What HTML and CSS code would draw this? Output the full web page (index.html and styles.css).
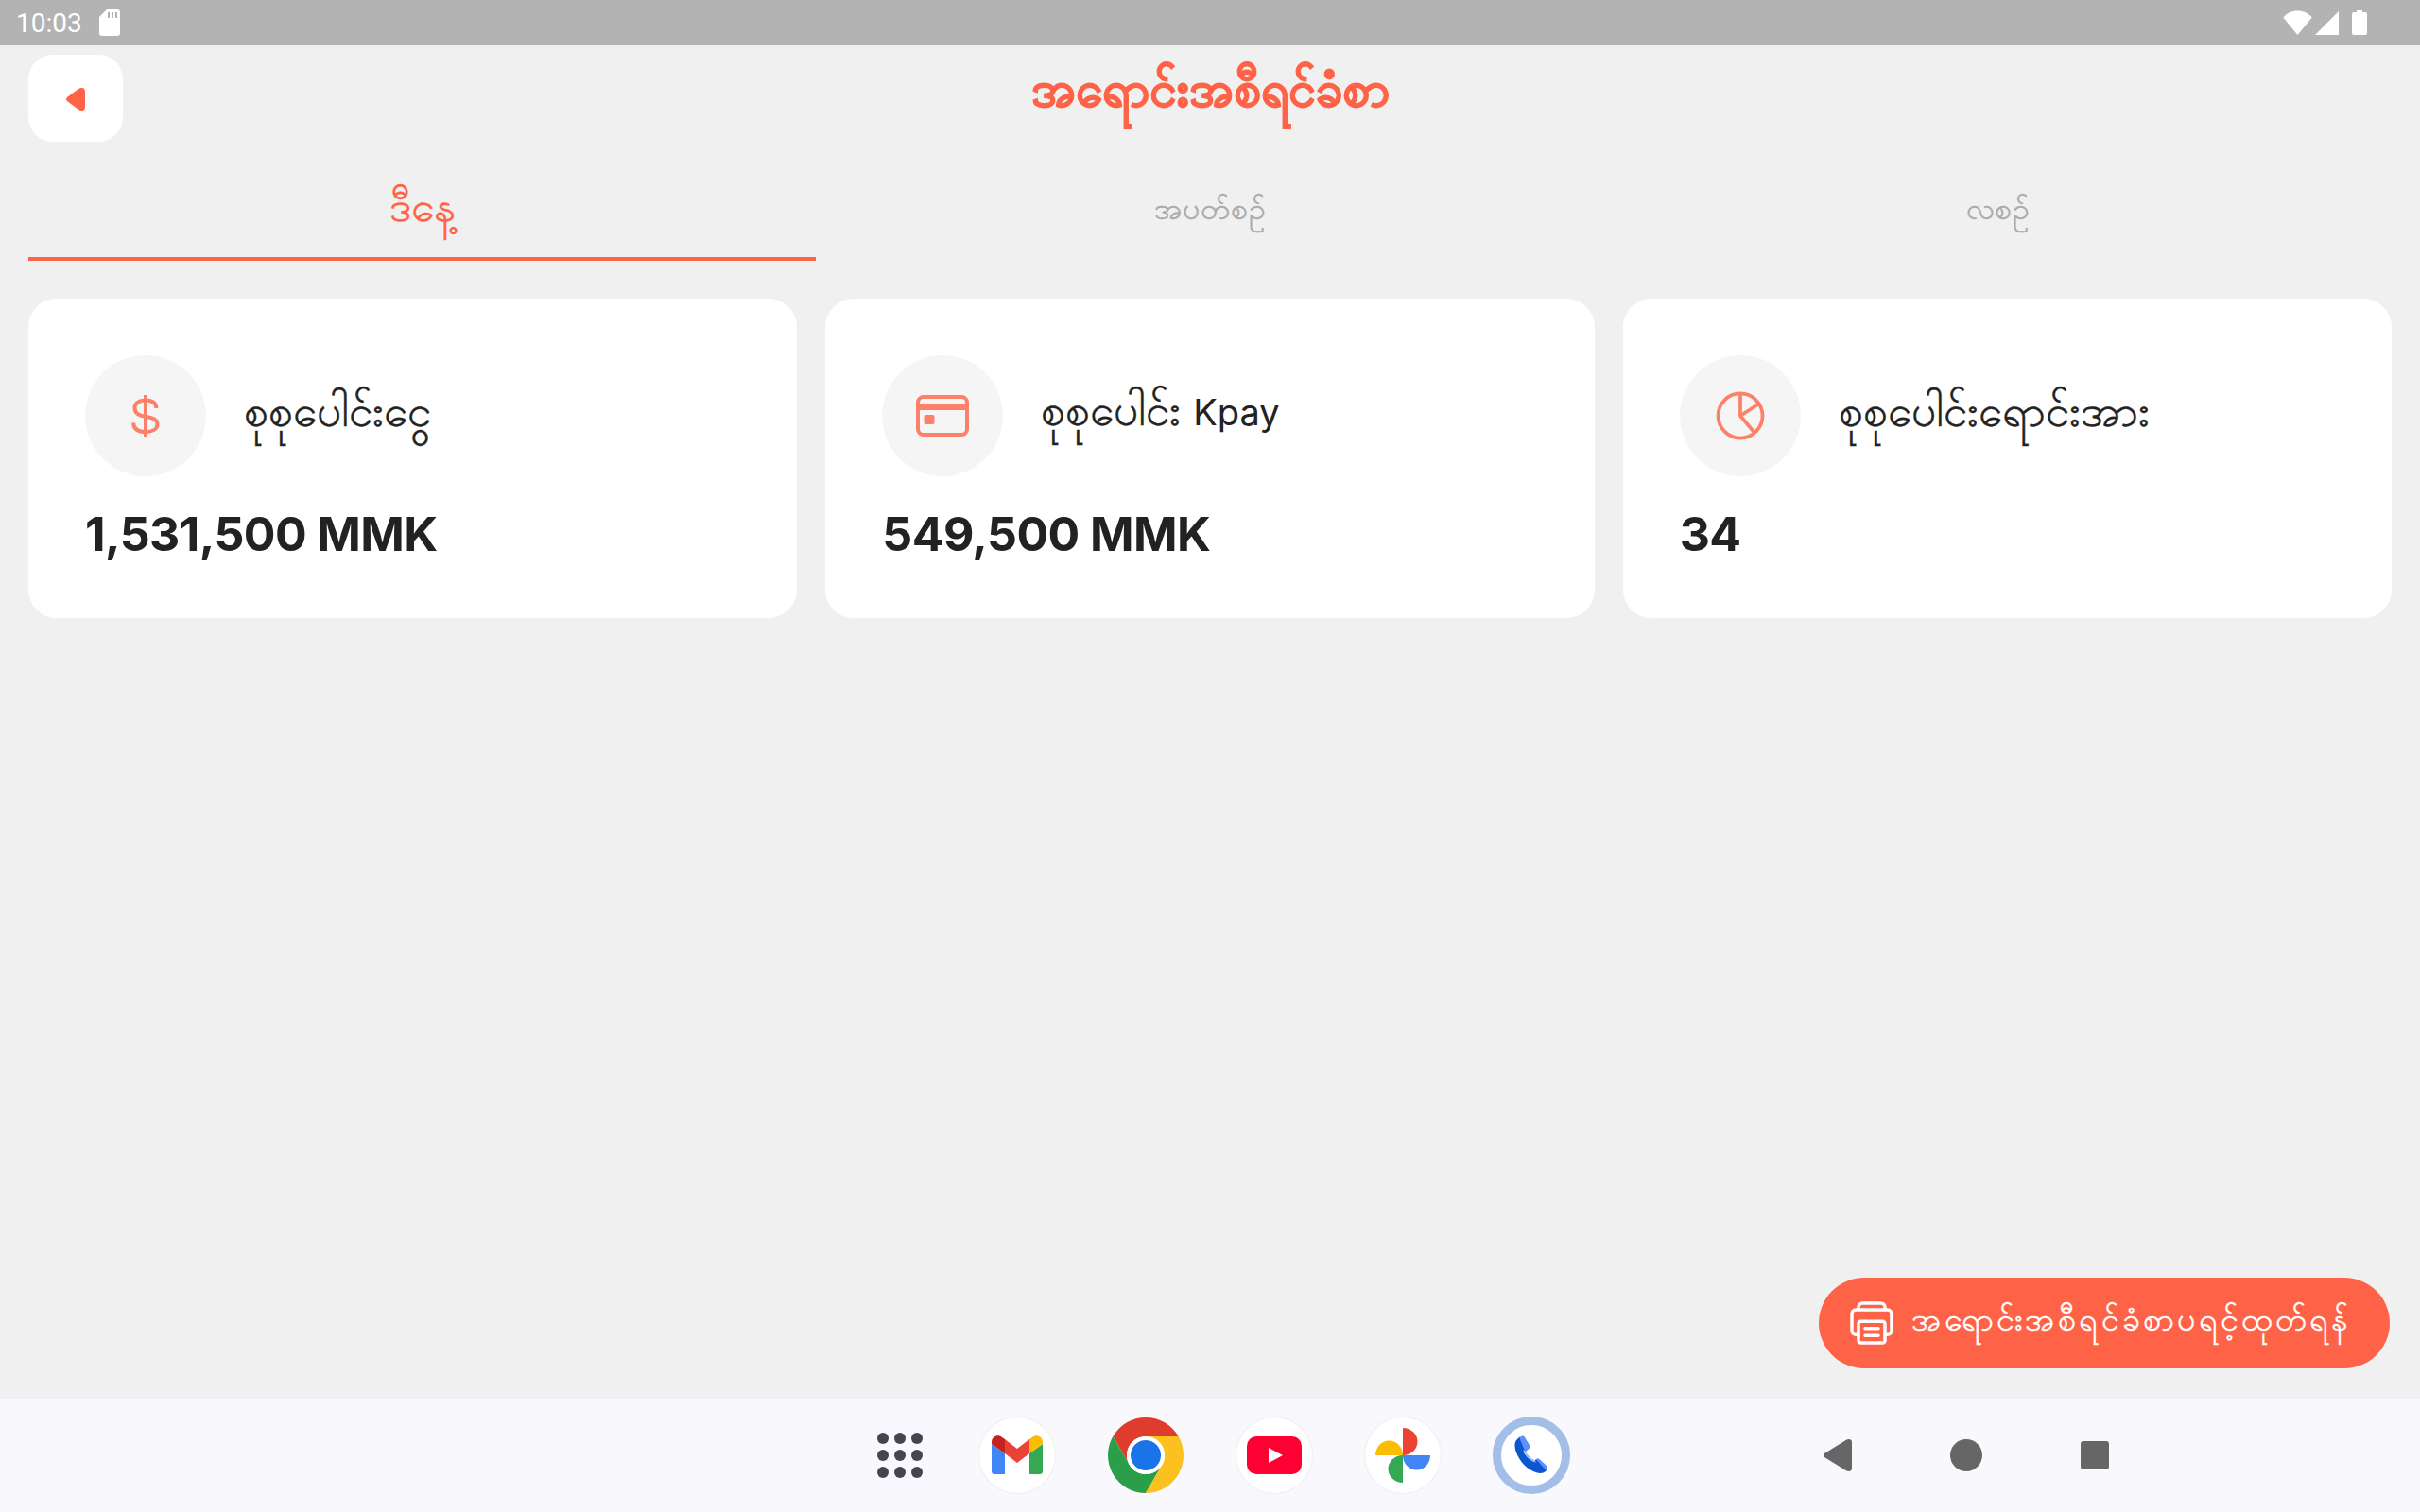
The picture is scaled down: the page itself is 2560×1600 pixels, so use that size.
FILE: index.html
```html
<!DOCTYPE html>
<html lang="my">
<head>
<meta charset="utf-8">
<title>အရောင်းအစီရင်ခံစာ</title>
<link rel="stylesheet" href="styles.css">
</head>
<body>
<div class="screen">
  <div class="status">
    <div class="status-left">
      <span class="time">10:03</span>
      <svg class="sd" viewBox="0 0 22 28"><path d="M8 0h11a3 3 0 0 1 3 3v22a3 3 0 0 1-3 3H3a3 3 0 0 1-3-3V8z" fill="#fff"/><path d="M9 3h2v6H9zM13 3h2v6h-2zM17 3h2v6h-2z" fill="#b3b3b3"/></svg>
    </div>
    <div class="status-right">
      <svg class="wifi" viewBox="0 0 31 26"><path d="M15.500 26 .3 7.500C4 3 9.500.5 15.500.5S27 3 30.700 7.500z" fill="#fff"/></svg>
      <svg class="signal" viewBox="0 0 25 25"><path d="M25 0v25H0z" fill="#fff"/></svg>
      <svg class="battery" viewBox="0 0 16 26"><path d="M5 0h6v2h3a2 2 0 0 1 2 2v20a2 2 0 0 1-2 2H2a2 2 0 0 1-2-2V4a2 2 0 0 1 2-2h3z" fill="#fff"/></svg>
    </div>
  </div>

  <header class="header">
    <button class="back">
      <svg class="back-icon" viewBox="0 0 20 24"><path d="M1 10 13 1c3-2 7-1.500 7 3v16c0 4.500-4 5-7 3L1 14c-1.300-1-1.300-3 0-4z" fill="#ff6347"/></svg>
    </button>
    <h1 class="title">အရောင်းအစီရင်ခံစာ</h1>
  </header>

  <nav class="tabs">
    <div class="tab tab-active">ဒီနေ့</div>
    <div class="tab">အပတ်စဉ်</div>
    <div class="tab">လစဉ်</div>
  </nav>

  <section class="cards">
    <article class="card">
      <div class="card-head">
        <div class="icon-wrap">
          <svg class="icon-dollar" viewBox="0 0 48 48" fill="none" stroke="#ff6347" stroke-width="4"><path d="M24 2v44"/><path d="M35.500 16C35 10 30.500 7.500 24 7.500c-7 0-11.500 3.500-11.500 8.500 0 12.500 24 5.500 24 17 0 5-5 8-12.500 8-8 0-12.500-3.500-13-9.500"/></svg>
        </div>
        <div class="label">စုစုပေါင်းငွေ</div>
      </div>
      <div class="value">1,531,500 MMK</div>
    </article>
    <article class="card">
      <div class="card-head">
        <div class="icon-wrap">
          <svg class="icon-64" viewBox="0 0 512 512" fill="none" stroke="#ff6347"><rect x="48" y="96" width="416" height="320" rx="48" stroke-width="32"/><path d="M48 184h416" stroke-width="48"/><rect x="100" y="248" width="88" height="80" rx="16" fill="#ff6347" stroke="none"/></svg>
        </div>
        <div class="label">စုစုပေါင်း <span class="latin">Kpay</span></div>
      </div>
      <div class="value">549,500 MMK</div>
    </article>
    <article class="card">
      <div class="card-head">
        <div class="icon-wrap">
          <svg class="icon-64" viewBox="0 0 512 512" fill="none" stroke="#ff6347" stroke-width="30" stroke-linecap="round" stroke-linejoin="round"><circle cx="256" cy="256" r="188"/><path d="M256 68v188l152-98M256 256l114 136"/></svg>
        </div>
        <div class="label">စုစုပေါင်းရောင်းအား</div>
      </div>
      <div class="value">34</div>
    </article>
  </section>

  <main class="spacer"></main>

  <button class="fab">
    <svg class="fab-icon" viewBox="0 0 512 512" fill="none" stroke="#fff" stroke-width="32" stroke-linejoin="round"><path d="M384 368h24a40 40 0 0 0 40-40V168c0-22-18-40-40-40H104c-22 0-40 18-40 40v160a40 40 0 0 0 40 40h24"/><path d="M384 128v-24a40 40 0 0 0-40-40H168a40 40 0 0 0-40 40v24"/><rect x="128" y="240" width="256" height="208" rx="24"/><path d="M192 308h128M192 376h128" stroke-linecap="round"/></svg>
    <span class="fab-text">အရောင်းအစီရင်ခံစာပရင့်ထုတ်ရန်</span>
  </button>

  <footer class="navbar">
    <div class="dock">
      <svg class="apps" viewBox="0 0 48 48" fill="#45454f"><circle cx="6" cy="6" r="6"/><circle cx="24" cy="6" r="6"/><circle cx="42" cy="6" r="6"/><circle cx="6" cy="24" r="6"/><circle cx="24" cy="24" r="6"/><circle cx="42" cy="24" r="6"/><circle cx="6" cy="42" r="6"/><circle cx="24" cy="42" r="6"/><circle cx="42" cy="42" r="6"/></svg>
      <svg class="app app-disc" viewBox="0 0 80 80"><circle cx="40" cy="40" r="40" fill="#fff"/><path d="M13 28l14 10v22H16a3 3 0 0 1-3-3z" fill="#4285f4"/><path d="M67 28 53 38v22h11a3 3 0 0 0 3-3z" fill="#34a853"/><path d="M27 23l13 10 13-10v15L40 48 27 38z" fill="#ea4335"/><path d="M27 23v15L13 28v-2c0-6 7-9 11-5z" fill="#c5221f"/><path d="M53 23v15l14-10v-2c0-6-7-9-11-5z" fill="#fbbc04"/></svg>
      <svg class="app" viewBox="0 0 80 80"><path d="M5.360 20A40 40 0 0 1 74.640 20H40A20 20 0 0 0 22.680 50z" fill="#e03c2e"/><path d="M5.360 20 22.680 50A20 20 0 0 0 57.320 50L40 80A40 40 0 0 1 5.360 20z" fill="#2b9e49"/><path d="M74.640 20H40A20 20 0 0 1 57.320 50L40 80A40 40 0 0 0 74.640 20z" fill="#fcc11e"/><circle cx="40" cy="40" r="20" fill="#fff"/><circle cx="40" cy="40" r="16" fill="#1a73e8"/></svg>
      <svg class="app app-disc" viewBox="0 0 80 80"><circle cx="40" cy="40" r="40" fill="#fff"/><rect x="11" y="20" width="58" height="40" rx="10" fill="#ff0033"/><path d="M34 32l15 8-15 8z" fill="#fff"/></svg>
      <svg class="app app-disc" viewBox="0 0 80 80"><circle cx="40" cy="40" r="40" fill="#fff"/><path d="M40 11a15.500 14.500 0 0 1 0 29z" fill="#ea4335"/><path d="M11 40a14.500 15.500 0 0 1 29 0z" fill="#fbbc04"/><path d="M40 69a15.500 14.500 0 0 1 0-29z" fill="#34a853"/><path d="M69 40a14.500 15.500 0 0 1-29 0z" fill="#4285f4"/></svg>
      <svg class="app-phone" viewBox="0 0 84 84"><circle cx="42" cy="42" r="36.500" fill="#fff" stroke="#a3bfe8" stroke-width="9"/><path d="M29.500 22.500 26.500 25.500C24 28 24 33 25.500 37.500 29 49 39 58 48 60.500 52 61.500 55.500 61 58 58L58.500 55 47 46 44.500 49C40 47 35 42 33.500 37.500L38 34.500z" fill="#0b57d0"/><path d="M29.500 24C31 21 34 21 35 23L40.500 32C41 33 40.500 34 39.500 35L35.500 38.500z" fill="#5e8ffa"/><path d="M47 46C48 45 49.500 45 50.500 46L58 53C59 54.500 59 56.500 57.500 58z" fill="#5e8ffa"/><path d="M33.500 36 36 38.500C38 42 41.500 45.500 45.500 47.500L47.500 50C41 48 36 43 33.500 36z" fill="#8fb0fb"/></svg>
    </div>
    <div class="sysnav">
      <svg class="nav-back" viewBox="0 0 30 34"><path d="M1 15 24 .8c2.500-1.500 6-.8 6 2.200v28c0 3-3.500 3.700-6 2.200L1 19c-1.300-1-1.300-3 0-4z" fill="#666"/></svg>
      <span class="nav-home"></span>
      <span class="nav-recent"></span>
    </div>
  </footer>
</div>
</body>
</html>
```

FILE: styles.css
```css
* { box-sizing: border-box; }
html, body { margin: 0; padding: 0; }
body { font-family: Inter, "Noto Sans", "DejaVu Sans", sans-serif; background: #f0f0f0; }
.screen { position: relative; width: 2560px; height: 1600px; display: flex; flex-direction: column; overflow: hidden; background: #f0f0f0; }

.status { height: 48px; flex: none; background: #b3b3b3; display: flex; justify-content: space-between; align-items: center; padding: 0 56px 0 17px; }
.status-left { display: flex; align-items: center; gap: 18px; padding-top: 2px; }
.time { font-family: Roboto, sans-serif; font-size: 28px; color: #fff; line-height: 48px; }
.sd { width: 22px; height: 28px; display: block; margin-top: -2px; }
.status-right { display: flex; align-items: center; }
.wifi { width: 31px; height: 26px; display: block; }
.signal { width: 25px; height: 25px; display: block; margin-left: 3px; }
.battery { width: 16px; height: 26px; display: block; margin-left: 14px; }

.header { position: relative; flex: none; height: 112px; padding: 10px 30px; display: flex; }
.back { width: 100px; height: 92px; border: 0; border-radius: 26px; background: #fff; padding: 2px 0 0; display: flex; align-items: center; justify-content: center; }
.back-icon { width: 20px; height: 24px; display: block; }
.title { position: absolute; left: 0; right: 0; top: 11px; margin: 0; text-align: center; font-size: 51px; line-height: 70px; font-weight: 800; color: #ff6347; -webkit-text-stroke: 1.2px #ff6347; }

.tabs { flex: none; height: 116px; margin: 0 30px; display: flex; }
.tab { flex: 1; display: flex; align-items: center; justify-content: center; padding-top: 16px; font-size: 32px; color: #aaa; -webkit-text-stroke: .4px #aaa; border-bottom: 4px solid transparent; }
.tab-active { font-size: 45px; padding-top: 14px; color: #ff6347; -webkit-text-stroke: .4px #ff6347; border-bottom-color: #ff6347; }

.cards { flex: none; display: flex; gap: 30px; margin: 40px 30px 0; }
.card { flex: 1; height: 338px; background: #fff; border-radius: 30px; padding: 60px; }
.card-head { display: flex; align-items: center; gap: 40px; }
.icon-wrap { width: 128px; height: 128px; border-radius: 50%; background: #f5f5f5; display: flex; align-items: center; justify-content: center; }
.icon-wrap svg { opacity: .8; display: block; }
.icon-dollar { width: 48px; height: 48px; }
.icon-64 { width: 64px; height: 64px; }
.label { font-size: 46px; line-height: 60px; color: #222; -webkit-text-stroke: .4px #222; padding-bottom: 12px; }
.latin { font-size: 38px; -webkit-text-stroke: 0; }
.value { margin-top: 29px; font-size: 50px; line-height: 64px; font-weight: 700; letter-spacing: -.6px; color: #222; }

.spacer { flex: 1; }

.fab { position: absolute; left: 1924px; top: 1352px; width: 604px; height: 96px; border: 0; border-radius: 48px; background: #ff6347; display: flex; align-items: center; padding: 0 0 2px 28px; }
.fab-icon { width: 56px; height: 56px; display: block; flex: none; margin-top: 2px; }
.fab-text { margin-left: 14px; font-family: inherit; font-size: 34px; letter-spacing: 3.1px; color: #fff; -webkit-text-stroke: .4px #fff; white-space: nowrap; }

.navbar { flex: none; height: 120px; background: #f9f8fd; display: flex; align-items: center; }
.dock { display: flex; align-items: center; margin-left: 928px; }
.apps { width: 48px; height: 48px; display: block; margin-right: 60px; }
.app { width: 80px; height: 80px; display: block; margin-right: 56px; }
.app-disc { filter: drop-shadow(0 0 1px rgba(0, 0, 0, .1)); }
.app-phone { width: 84px; height: 84px; display: block; margin-left: -2px; }
.sysnav { display: flex; align-items: center; margin-left: 267px; }
.nav-back { width: 30px; height: 34px; display: block; }
.nav-home { width: 34px; height: 34px; border-radius: 50%; background: #666; margin-left: 104px; }
.nav-recent { width: 30px; height: 30px; border-radius: 3px; background: #666; margin-left: 104px; }
```
